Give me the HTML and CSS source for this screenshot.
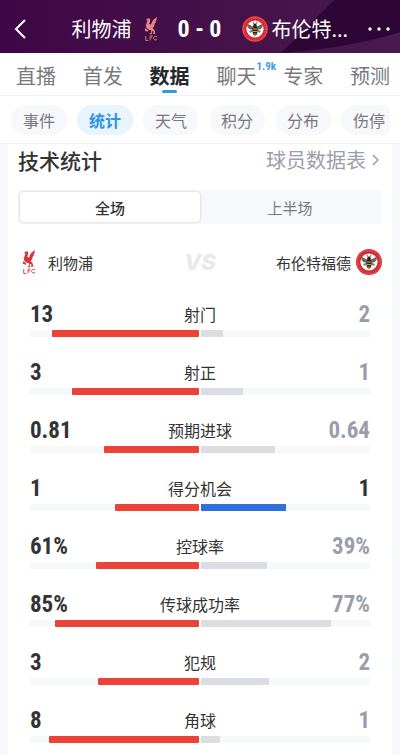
FILE: index.html
```html
<!DOCTYPE html>
<html lang="zh-CN">

<head>
  <meta charset="utf-8">
  <meta name="viewport" content="width=device-width, initial-scale=1" />
  <title>利物浦 0 - 0 布伦特福德</title>
  <link rel="stylesheet" href="styles.css">
</head>

<body>
  <!-- shared club badges -->
  <svg class="defs" aria-hidden="true">
    <symbol id="liverpool" viewBox="0 0 16 28">
      <g fill="currentColor">
        <path d="M7 2 L4 2 L2 4 L4 4 L3 7 L2 10 L3 13 L6 15 L8 15 L8 18 L6 20 L9 20 L9 16 L11 17 L10 20 L13 19 L12 15 L10 13 L12 10 L12 8 L14 6 L13 5 L15 3 L14 3 L15 0 L11 3 L9 6 L8 9 L6 8 L7 5 Z" />
        <path d="M3 14 L1 13 L1 16 L4 17 L5 16 Z" />
      </g>
      <path d="M2 22 V27 H5 M7 27 V22 H10 M7 24 H9 M15 23 Q11 21 11 25 Q12 28 15 26" fill="none" stroke="currentColor" stroke-width="1" />
    </symbol>
    <symbol id="brentford" viewBox="0 0 26 26">
      <circle cx="13" cy="13" r="13" fill="#d5222b" />
      <circle cx="13" cy="13" r="12" fill="none" stroke="#e98a8e" stroke-width=".5" />
      <circle cx="13" cy="13" r="10.3" fill="none" stroke="#e4666c" stroke-width="1" stroke-dasharray="1 1.2" />
      <circle cx="13" cy="13" r="8.6" fill="#fff" />
      <path d="M12 11 L6 8 L5 10 L7 13 L11 14 Z M14 11 L20 8 L21 10 L19 13 L15 14 Z" fill="#6b6860" />
      <path d="M12 13 L7 15 L8 17 L12 15 Z M14 13 L19 15 L18 17 L14 15 Z" fill="#8b887e" />
      <ellipse cx="13" cy="14.5" rx="2.5" ry="5" fill="#292018" />
      <path d="M11 13 H15 M11 15.5 H15 M11.5 18 H14.5" stroke="#d3a62f" stroke-width="1" />
      <circle cx="13" cy="9.2" r="1.7" fill="#292018" />
      <path d="M12 8 L11 6 M14 8 L15 6" stroke="#292018" stroke-width=".7" />
    </symbol>
  </svg>

  <header class="topbar">
    <svg class="topbar-bg" viewBox="0 0 400 53" preserveAspectRatio="none" aria-hidden="true">
      <path d="M334 0 L281 53 Q350 48 400 32 V0 Z" fill="#2d0635" />
    </svg>
    <button class="back" aria-label="返回">
      <svg width="12" height="20" viewBox="0 0 12 20"><path d="M11 1 L2 10 L11 19" fill="none" stroke="currentColor" stroke-width="2" /></svg>
    </button>
    <div class="match">
      <div class="side home">
        <span>利物浦</span>
        <svg class="bird"><use href="#liverpool" /></svg>
      </div>
      <strong class="score">0 - 0</strong>
      <div class="side away">
        <svg class="crest"><use href="#brentford" /></svg>
        <span>布伦特...</span>
      </div>
    </div>
    <button class="more" aria-label="更多">
      <svg width="22" height="4" viewBox="0 0 22 4" fill="currentColor"><circle cx="2" cy="2" r="1.7" /><circle cx="11" cy="2" r="1.7" /><circle cx="20" cy="2" r="1.7" /></svg>
    </button>
  </header>

  <nav class="tabs">
    <a href="#">直播</a>
    <a href="#">首发</a>
    <a href="#" class="active">数据</a>
    <a href="#">聊天<sup class="count">1.9k</sup></a>
    <a href="#">专家</a>
    <a href="#">预测</a>
  </nav>

  <nav class="chips">
    <div class="chips-scroll">
      <button>事件</button>
      <button class="active">统计</button>
      <button>天气</button>
      <button>积分</button>
      <button>分布</button>
      <button>伤停</button>
    </div>
  </nav>

  <main class="card">
    <div class="title">
      <h2>技术统计</h2>
      <a href="#">球员数据表
        <svg width="7" height="12" viewBox="0 0 7 12"><path d="M1 1 L6 6 L1 11" fill="none" stroke="currentColor" stroke-width="1.5" /></svg>
      </a>
    </div>

    <div class="period">
      <button class="active">全场</button>
      <button>上半场</button>
    </div>

    <div class="teams">
      <div class="team">
        <svg class="bird"><use href="#liverpool" /></svg>
        <span>利物浦</span>
      </div>
      <em class="vs">VS</em>
      <div class="team right">
        <span>布伦特福德</span>
        <svg class="crest"><use href="#brentford" /></svg>
      </div>
    </div>

    <div class="stats">
      <div class="stat">
        <div class="values"><b>13</b><span>射门</span><b class="low">2</b></div>
        <div class="bars">
          <div class="bar home"><i style="width: 87%"></i></div>
          <div class="bar"><i style="width: 13%"></i></div>
        </div>
      </div>
      <div class="stat">
        <div class="values"><b>3</b><span>射正</span><b class="low">1</b></div>
        <div class="bars">
          <div class="bar home"><i style="width: 75%"></i></div>
          <div class="bar"><i style="width: 25%"></i></div>
        </div>
      </div>
      <div class="stat">
        <div class="values"><b>0.81</b><span>预期进球</span><b class="low">0.64</b></div>
        <div class="bars">
          <div class="bar home"><i style="width: 56%"></i></div>
          <div class="bar"><i style="width: 44%"></i></div>
        </div>
      </div>
      <div class="stat">
        <div class="values"><b>1</b><span>得分机会</span><b>1</b></div>
        <div class="bars">
          <div class="bar home"><i style="width: 50%"></i></div>
          <div class="bar blue"><i style="width: 50%"></i></div>
        </div>
      </div>
      <div class="stat">
        <div class="values"><b>61%</b><span>控球率</span><b class="low">39%</b></div>
        <div class="bars">
          <div class="bar home"><i style="width: 61%"></i></div>
          <div class="bar"><i style="width: 39%"></i></div>
        </div>
      </div>
      <div class="stat">
        <div class="values"><b>85%</b><span>传球成功率</span><b class="low">77%</b></div>
        <div class="bars">
          <div class="bar home"><i style="width: 85%"></i></div>
          <div class="bar"><i style="width: 77%"></i></div>
        </div>
      </div>
      <div class="stat">
        <div class="values"><b>3</b><span>犯规</span><b class="low">2</b></div>
        <div class="bars">
          <div class="bar home"><i style="width: 60%"></i></div>
          <div class="bar"><i style="width: 40%"></i></div>
        </div>
      </div>
      <div class="stat">
        <div class="values"><b>8</b><span>角球</span><b class="low">1</b></div>
        <div class="bars">
          <div class="bar home"><i style="width: 89%"></i></div>
          <div class="bar"><i style="width: 11%"></i></div>
        </div>
      </div>
    </div>
  </main>
</body>

</html>
```
FILE: styles.css
```css
* {
  box-sizing: border-box;
}

body {
  display: flex;
  flex-direction: column;
  min-height: 100vh;
  margin: 0;
  background: #f7f8fc;
  color: #333;
  font-family: "Noto Sans CJK SC", sans-serif;
}

a {
  color: inherit;
  text-decoration: none;
}

button {
  border: 0;
  padding: 0;
  background: none;
  color: inherit;
  font-family: inherit;
  cursor: pointer;
}

svg {
  display: block;
  flex: none;
}

.defs {
  position: absolute;
  width: 0;
  height: 0;
}

.bird {
  width: 14px;
  height: 26px;
  color: #d8343a;
}

.crest {
  width: 26px;
  height: 26px;
}

/* top bar */
.topbar {
  position: relative;
  display: flex;
  align-items: center;
  height: 53px;
  padding: 4px 10px 0 14px;
  background: linear-gradient(90deg, #3e0745, #491a4d);
  color: #fff;
}

.topbar-bg {
  position: absolute;
  top: 0;
  left: 0;
  width: 100%;
  height: 100%;
}

.back,
.match,
.more {
  position: relative;
}

.match {
  flex: 1;
  display: grid;
  grid-template-columns: 1fr 44px 1fr;
  align-items: center;
  gap: 20px;
  padding-left: 5px;
}

.side {
  display: flex;
  align-items: center;
  gap: 12px;
  font-size: 20px;
  line-height: 30px;
  white-space: nowrap;
}

.side.home {
  justify-content: flex-end;
}

.side.away {
  gap: 4px;
}

.topbar .bird {
  color: #e88484;
}

.score {
  font-family: "Roboto Condensed", Roboto, sans-serif;
  font-size: 24px;
  line-height: 30px;
  text-align: center;
  white-space: nowrap;
}

/* tabs */
.tabs {
  display: flex;
  justify-content: space-between;
  height: 43px;
  padding: 7px 10px 0 16px;
  border-bottom: 1px solid #f3f3f5;
  background: #fff;
  color: #77797e;
  font-size: 20px;
  line-height: 32px;
}

.tabs a {
  position: relative;
}

.tabs .active {
  color: #26272a;
  font-weight: bold;
}

.tabs .active::after {
  content: "";
  position: absolute;
  left: 50%;
  bottom: 2px;
  width: 15px;
  height: 3px;
  margin-left: -8px;
  border-radius: 2px;
  background: #3697de;
}

.count {
  position: absolute;
  top: 1px;
  left: 100%;
  color: #3b9fdf;
  font-family: "Roboto Condensed", Roboto, sans-serif;
  font-size: 11px;
  font-weight: bold;
  line-height: 12px;
}

/* chips */
.chips {
  padding: 9px 10px 8px 11px;
  border-bottom: 1px solid #f3f3f5;
  background: #fff;
}

.chips-scroll {
  display: flex;
  gap: 10px;
  overflow: hidden;
}

.chips button {
  flex: none;
  width: 56px;
  height: 30px;
  border-radius: 15px;
  background: #f7f8fb;
  color: #77797e;
  font-size: 16px;
  line-height: 24px;
}

.chips .active {
  background: #e8f4fe;
  color: #3294e2;
  font-weight: bold;
}

/* statistics card */
.card {
  flex: 1;
  margin: 0 8px;
  padding: 0 10px;
  background: #fff;
}

.title {
  display: flex;
  justify-content: space-between;
  align-items: center;
  height: 32px;
}

.title h2 {
  margin: 0;
  font-size: 21px;
  font-weight: 500;
  line-height: 30px;
}

.title a {
  display: flex;
  align-items: center;
  gap: 6px;
  padding-right: 3px;
  color: #9a9ea9;
  font-size: 20px;
  line-height: 30px;
}

.period {
  display: flex;
  height: 34px;
  margin-top: 14px;
  padding: 2px;
  border-radius: 4px;
  background: #f7f8fb;
}

.period button {
  flex: 1;
  border-radius: 4px;
  color: #77797e;
  font-size: 15px;
}

.period .active {
  background: #fff;
  box-shadow: 0 0 3px rgba(0, 0, 0, 0.2);
  color: #333;
  font-weight: 500;
}

.teams {
  display: grid;
  grid-template-columns: 1fr auto 1fr;
  align-items: center;
  height: 76px;
}

.team {
  display: flex;
  align-items: center;
  gap: 12px;
  padding-left: 4px;
  font-size: 15px;
}

.team.right {
  justify-content: flex-end;
  gap: 5px;
  padding: 0;
}

.vs {
  color: #e9e9ec;
  font-family: Inter, sans-serif;
  font-size: 22px;
  font-weight: 800;
  line-height: 28px;
}

.stats {
  display: grid;
  gap: 21px;
  padding: 0 12px 8px;
}

.values {
  display: grid;
  grid-template-columns: 1fr auto 1fr;
  height: 30px;
  font-size: 16px;
  line-height: 28px;
}

.values b {
  font-family: "Roboto Condensed", Roboto, sans-serif;
  font-size: 23px;
  line-height: 30px;
}

.values b:last-child {
  text-align: right;
}

.values .low {
  color: #9a9ea9;
}

.bars {
  display: grid;
  grid-template-columns: 1fr 1fr;
  gap: 2px;
}

.bar {
  display: flex;
  height: 7px;
  background: #f7f8fa;
}

.bar i {
  background: #dcdce3;
}

.bar.home {
  justify-content: flex-end;
}

.bar.home i {
  border-radius: 1px;
  background: #ec4338;
}

.bar.blue i {
  background: #2f70df;
}
```
